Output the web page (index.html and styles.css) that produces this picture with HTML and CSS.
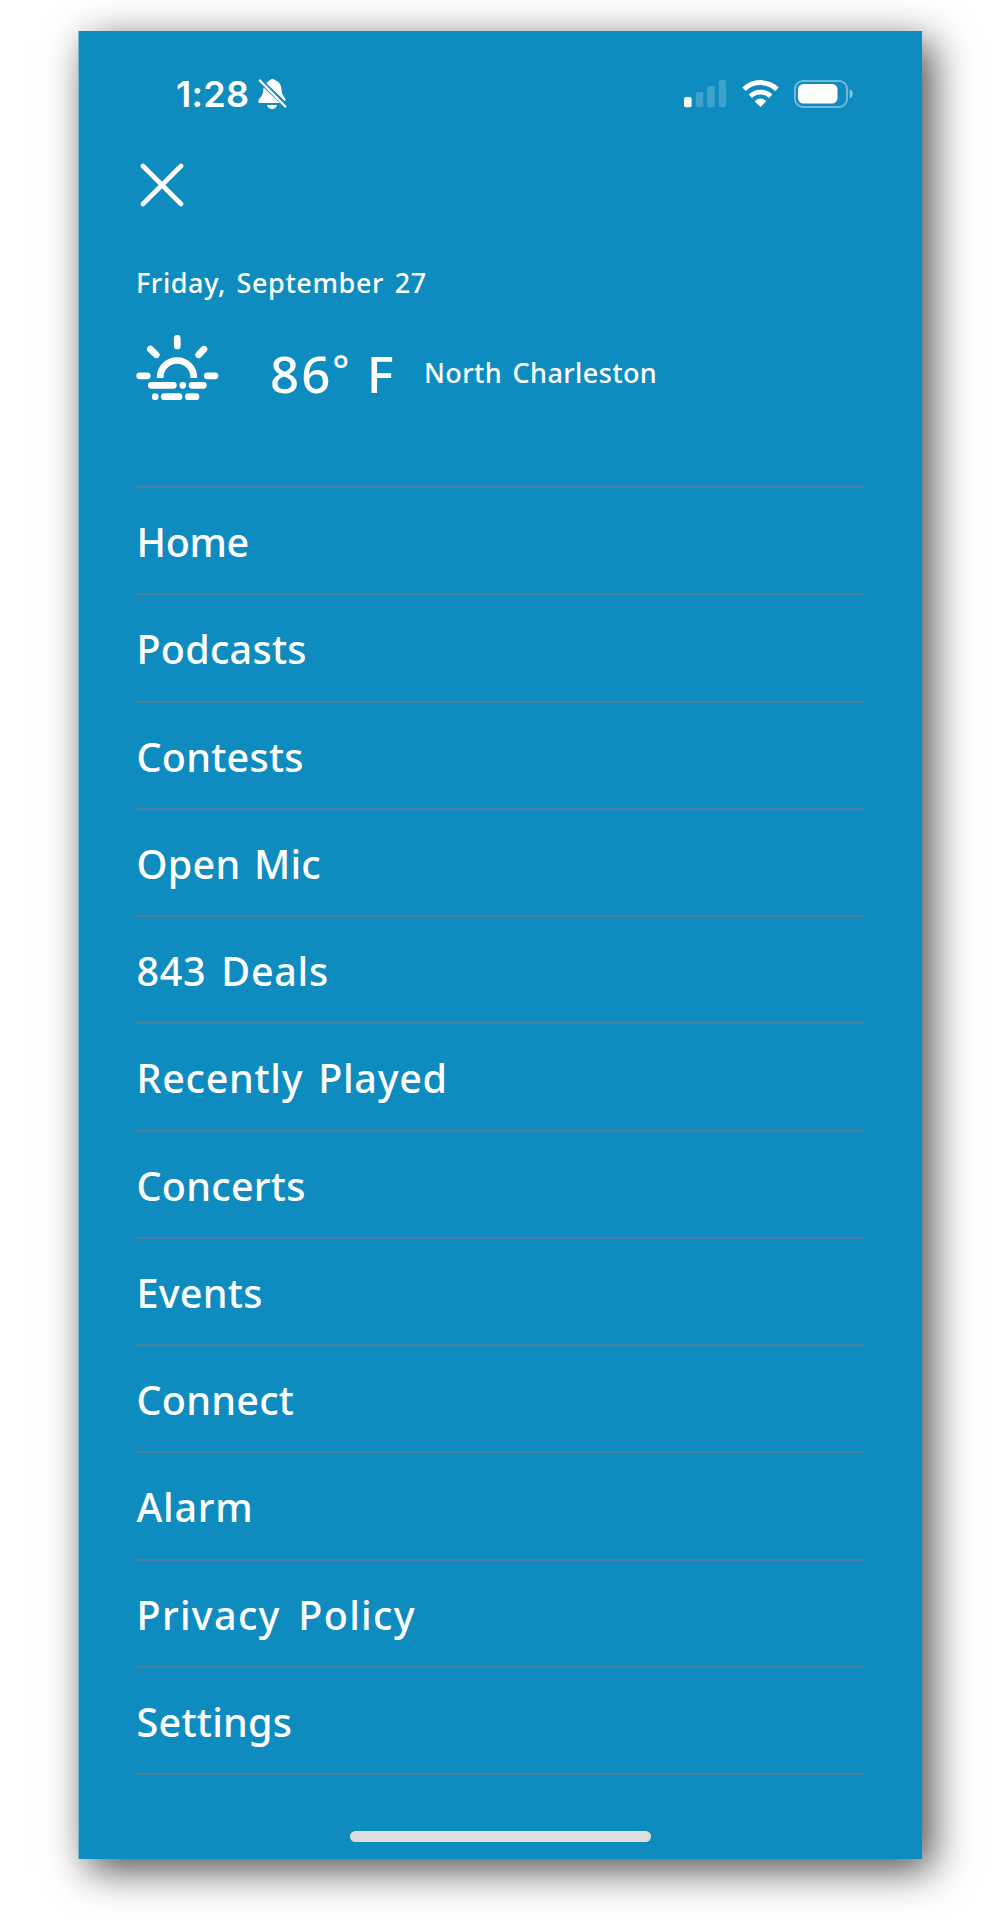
FILE: index.html
```html
<!DOCTYPE html>
<html lang="en">
<head>
    <meta charset="UTF-8">
    <title>Menu</title>
    <link rel="stylesheet" href="styles.css">
</head>
<body>
    <div class="phone">
        <div class="status">
            <span class="time">1:28</span>
            <svg class="bell" width="30" height="32" viewBox="0 0 30 32">
                <path d="M8.500 5.500C9.600 3.600 11 2.500 12.300 2.100 12.800.600 16.200.600 16.800 2.100 21.300 3.600 23.300 7.500 23.500 11.500 23.700 16 25.600 18 27.300 20.600V23.400Z" fill="#fff"/>
                <path d="M5.600 9.500 21.800 25H2C-.3 25 0 22.600 1.200 21 3.600 18 5.200 16.400 5.300 12Z" fill="#fff"/>
                <path d="M9 27h10c-.5 2.800-2.500 4-5 4s-4.500-1.200-5-4z" fill="#fff"/>
                <path d="M1.800 2.500 27.300 28.500" stroke="#fff" stroke-width="2.300" stroke-linecap="round"/>
            </svg>
            <svg class="signal" width="43" height="28" viewBox="0 0 43 28">
                <rect x="0" y="17" width="7.600" height="10.300" rx="2" fill="#fff"/>
                <g fill="#fff" opacity=".2">
                    <rect x="12" y="12" width="7.300" height="15.300" rx="2"/>
                    <rect x="23.200" y="6" width="7.500" height="21.300" rx="2"/>
                    <rect x="34.800" y="0" width="7.300" height="27.300" rx="2"/>
                </g>
            </svg>
            <svg class="wifi" width="37" height="28" viewBox="0 0 37 28">
                <g fill="none" stroke="#fff" stroke-width="5">
                    <path d="M2 9.300a23.700 23.700 0 0 1 33 0"/>
                    <path d="M8.300 16.200a14.700 14.700 0 0 1 20.400 0" stroke-width="4.800"/>
                </g>
                <path d="M18.500 27 13.200 21.800c-.5-.6-.3-1 .2-1.300a8.500 8.500 0 0 1 10.200 0c.5.300.7.700.2 1.300z" fill="#fff"/>
            </svg>
            <svg class="battery" width="60" height="28" viewBox="0 0 60 28">
                <rect x="1" y="1" width="52" height="26" rx="8" fill="none" stroke="#fff" stroke-width="2" opacity=".4"/>
                <rect x="4" y="4" width="39.500" height="19.500" rx="5.500" fill="#fff"/>
                <path d="M55.700 9.500c4 1.500 4 7.500 0 9z" fill="#fff" opacity=".5"/>
            </svg>
        </div>

        <svg class="close" width="44" height="44" viewBox="0 0 44 44">
            <path d="M3 3 41 41M41 3 3 41" stroke="#fff" stroke-width="4.600" stroke-linecap="round"/>
        </svg>

        <div class="date">Friday, September 27</div>

        <div class="weather">
            <svg class="sun" width="83" height="66" viewBox="0 0 83 66">
                <g fill="none" stroke="#fff" stroke-width="6.700" stroke-linecap="round">
                    <path d="M41.300 3.400V11M14.300 14l6 5.800M68 14.200l-5.400 5.600M3.700 40.800h7.600M71.300 40.800H79"/>
                    <path d="M15.300 50.300h22.100M46.800 50.300h.01M56 50.300h11.400M19.200 61.700h.01M28.300 61.700H43M52.300 61.700H60"/>
                    <path d="M24.200 43v-.7a16.800 16.800 0 0 1 33.600 0v.7" stroke-linecap="butt"/>
                </g>
            </svg>
            <span class="temp">86<span class="deg">°</span> F</span>
            <span class="city">North Charleston</span>
        </div>

        <ul class="menu">
            <li class="tight">Home</li>
            <li>Podcasts</li>
            <li>Contests</li>
            <li>Open Mic</li>
            <li class="loose">843 Deals</li>
            <li class="loose">Recently Played</li>
            <li>Concerts</li>
            <li>Events</li>
            <li>Connect</li>
            <li class="loose">Alarm</li>
            <li class="wide">Privacy Policy</li>
            <li>Settings</li>
        </ul>

        <div class="home-bar"></div>
    </div>
</body>
</html>
```
FILE: styles.css
```css
* {
    margin: 0;
    padding: 0;
    box-sizing: border-box;
}

body {
    height: 1920px;
    padding: 31px 0 0 78px;
    background: #fff;
    overflow: hidden;
}

svg {
    display: block;
    flex: none;
}

.phone {
    display: flex;
    flex-direction: column;
    width: 844px;
    height: 1828px;
    padding: 44px 58px 0 57px;
    border-left: 1px solid #7fb5cf;
    background: #0e8cc0;
    box-shadow: 10px 11px 38px rgba(0, 0, 0, .7);
    color: #fff;
    font-family: "Noto Sans", "Open Sans", sans-serif;
    font-weight: 500;
    white-space: nowrap;
}

.status {
    display: flex;
    align-items: center;
    height: 38px;
    padding: 0 10px 0 40px;
}

.time {
    width: 82px;
    font: 600 36px/38px Inter, "Liberation Sans", sans-serif;
    letter-spacing: .3px;
}

.bell {
    margin-right: auto;
}

.wifi {
    margin: 0 15px;
}

.close {
    margin: 50px 0 0 4px;
}

.date {
    height: 40px;
    margin-top: 56px;
    font-size: 27px;
    line-height: 40px;
    letter-spacing: .6px;
    word-spacing: 3px;
}

.weather {
    display: flex;
    align-items: center;
    height: 66px;
    margin-top: 32px;
}

.temp {
    width: 154px;
    height: 60px;
    margin: 9px 0 0 51px;
    font-size: 51px;
    line-height: 60px;
    letter-spacing: 2px;
}

.deg {
    position: relative;
    top: -9px;
    font-size: 40px;
    line-height: 1;
    letter-spacing: 2px;
}

.city {
    margin-top: 9px;
    font-size: 27px;
    line-height: 40px;
    letter-spacing: .4px;
    word-spacing: 3px;
}

.menu {
    margin-top: 85px;
    border-top: 2px solid #4a8099;
    list-style: none;
}

.menu li {
    height: 107.25px;
    padding: 2px 0 0 .5px;
    border-bottom: 2px solid #4a8099;
    font-size: 39.5px;
    line-height: 105px;
    letter-spacing: .25px;
    word-spacing: 3px;
}

.menu .tight {
    letter-spacing: -.4px;
}

.menu .loose {
    letter-spacing: .7px;
    word-spacing: 4px;
}

.menu .wide {
    letter-spacing: 1.3px;
    word-spacing: 6px;
}

.home-bar {
    width: 301px;
    height: 11px;
    margin: 56px auto 0;
    border-radius: 6px;
    background: #ddd;
}
```
